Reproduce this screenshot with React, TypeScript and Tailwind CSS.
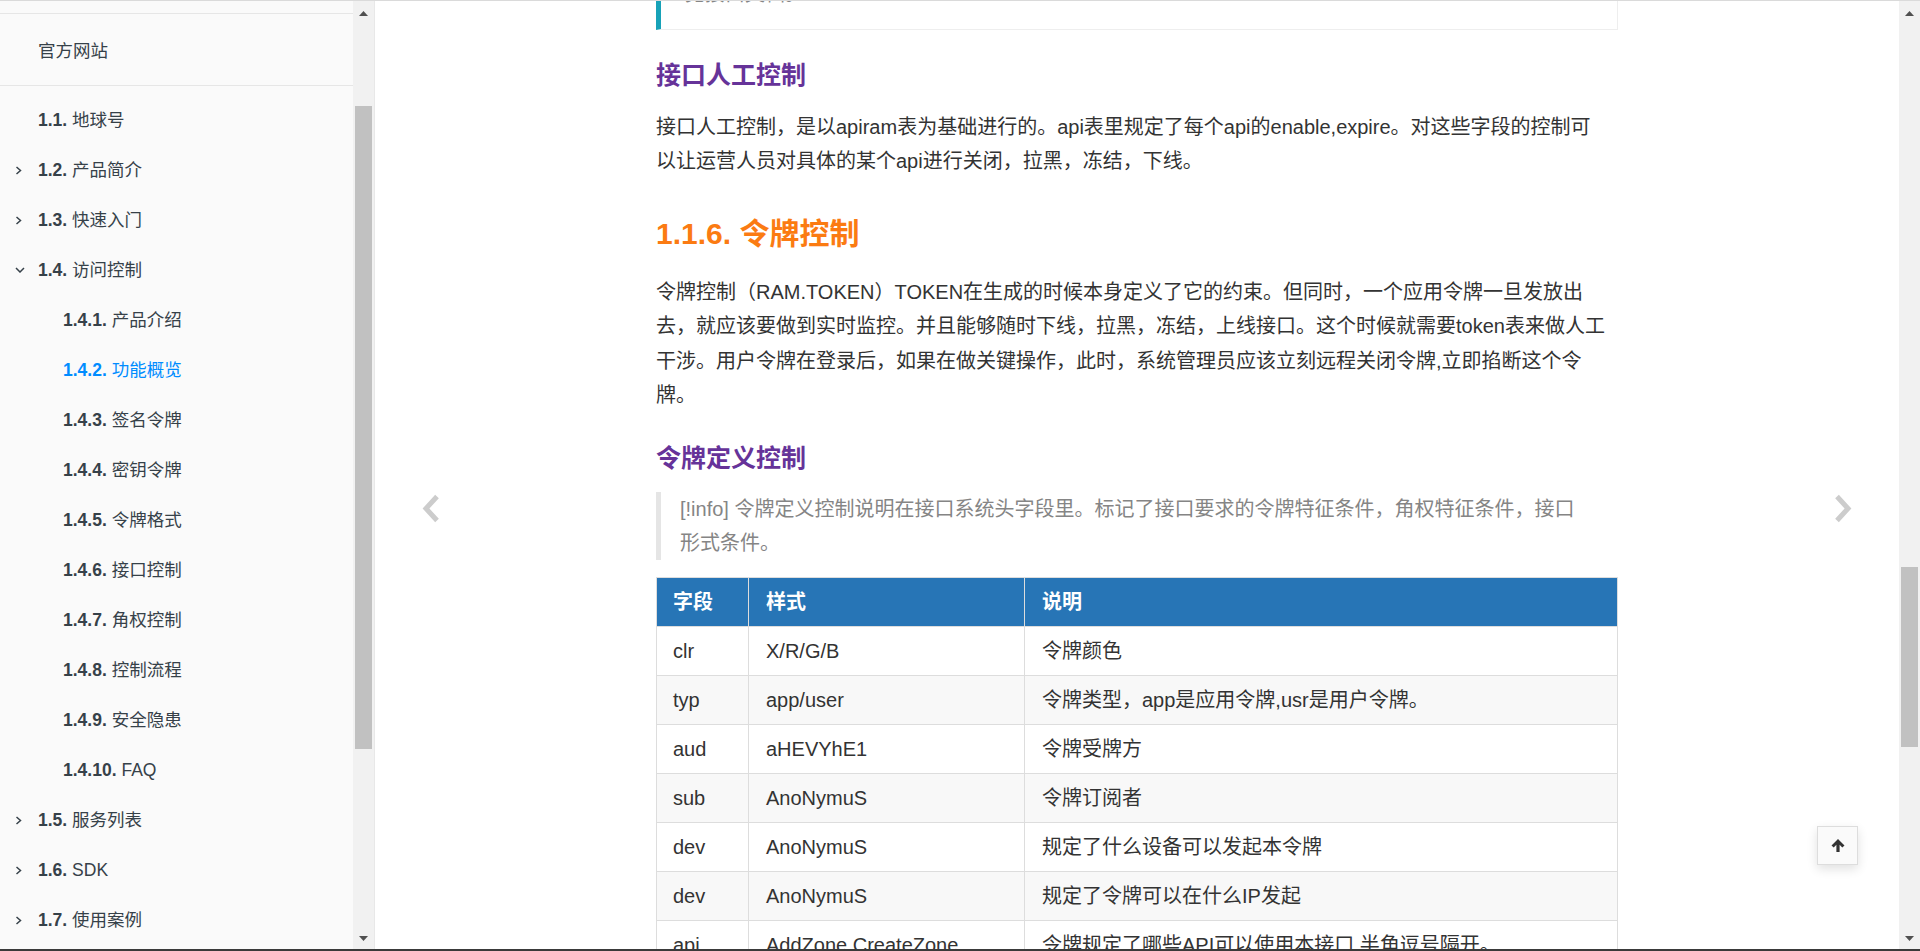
import React from "react";

type Item = { n: string; t: string; lvl: 1 | 2; chev?: "right" | "down"; active?: boolean };

const items: Item[] = [
  { n: "1.1.", t: "地球号", lvl: 1 },
  { n: "1.2.", t: "产品简介", lvl: 1, chev: "right" },
  { n: "1.3.", t: "快速入门", lvl: 1, chev: "right" },
  { n: "1.4.", t: "访问控制", lvl: 1, chev: "down" },
  { n: "1.4.1.", t: "产品介绍", lvl: 2 },
  { n: "1.4.2.", t: "功能概览", lvl: 2, active: true },
  { n: "1.4.3.", t: "签名令牌", lvl: 2 },
  { n: "1.4.4.", t: "密钥令牌", lvl: 2 },
  { n: "1.4.5.", t: "令牌格式", lvl: 2 },
  { n: "1.4.6.", t: "接口控制", lvl: 2 },
  { n: "1.4.7.", t: "角权控制", lvl: 2 },
  { n: "1.4.8.", t: "控制流程", lvl: 2 },
  { n: "1.4.9.", t: "安全隐患", lvl: 2 },
  { n: "1.4.10.", t: "FAQ", lvl: 2 },
  { n: "1.5.", t: "服务列表", lvl: 1, chev: "right" },
  { n: "1.6.", t: "SDK", lvl: 1, chev: "right" },
  { n: "1.7.", t: "使用案例", lvl: 1, chev: "right" },
];

const rows: [string, string, string][] = [
  ["clr", "X/R/G/B", "令牌颜色"],
  ["typ", "app/user", "令牌类型，app是应用令牌,usr是用户令牌。"],
  ["aud", "aHEVYhE1", "令牌受牌方"],
  ["sub", "AnoNymuS", "令牌订阅者"],
  ["dev", "AnoNymuS", "规定了什么设备可以发起本令牌"],
  ["dev", "AnoNymuS", "规定了令牌可以在什么IP发起"],
  ["api", "AddZone,CreateZone", "令牌规定了哪些API可以使用本接口,半角逗号隔开。"],
];

function Chevron({ dir }: { dir: "right" | "down" }) {
  if (dir === "right") {
    return (
      <svg width="7" height="9" viewBox="0 0 7 9" className="block">
        <polyline points="1.5,1 5.5,4.5 1.5,8" fill="none" stroke="#364149" strokeWidth="1.5" />
      </svg>
    );
  }
  return (
    <svg width="10" height="6" viewBox="0 0 10 6" className="block">
      <polyline points="1,1 5,5 9,1" fill="none" stroke="#364149" strokeWidth="1.5" />
    </svg>
  );
}

function Scrollbar({ thumbTop, thumbH }: { thumbTop: number; thumbH: number }) {
  return (
    <div className="relative w-[21px] shrink-0 bg-[#f1f1f1] h-full">
      <svg width="9" height="5" viewBox="0 0 9 5" className="absolute left-[6px] top-[10px]">
        <polygon points="0,5 4.5,0 9,5" fill="#505050" />
      </svg>
      <div
        className="absolute left-[2px] w-[17px] bg-[#c1c1c1]"
        style={{ top: thumbTop, height: thumbH }}
      />
      <svg width="9" height="5" viewBox="0 0 9 5" className="absolute left-[6px] bottom-[8px]">
        <polygon points="0,0 9,0 4.5,5" fill="#505050" />
      </svg>
    </div>
  );
}

function NavArrow({ dir }: { dir: "left" | "right" }) {
  return (
    <svg width="18" height="29" viewBox="0 0 18 29">
      {dir === "left" ? (
        <polyline points="15,2.5 4,14.5 15,26.5" fill="none" stroke="#cccccc" strokeWidth="5" />
      ) : (
        <polyline points="3,2.5 14,14.5 3,26.5" fill="none" stroke="#cccccc" strokeWidth="5" />
      )}
    </svg>
  );
}

export default function App() {
  const font = "font-['Liberation_Sans','Noto_Sans_CJK_SC',sans-serif]";
  return (
    <div
      className={`w-[1920px] h-[951px] overflow-hidden flex flex-col bg-white border-t border-[#dadada] ${font}`}
    >
      <div className="flex flex-1 min-h-0">
        {/* Sidebar */}
        <div className="w-[375px] shrink-0 flex bg-[#fafafa] border-r border-[#e8e8e8]">
          <div className="flex-1 overflow-hidden text-[17.5px] text-[#364149] pt-[12px]">
            <div className="h-px bg-[#e6e6e6]" />
            <div className="h-[50px] mt-[12px] flex items-center pl-[38px]">官方网站</div>
            <div className="h-px bg-[#e6e6e6] my-[9px]" />
            {items.map((it, i) => (
              <div
                key={i}
                className={`h-[50px] flex items-center whitespace-nowrap ${
                  it.lvl === 1 ? "pl-[15px]" : "pl-[63px]"
                } ${it.active ? "text-[#008cff]" : ""}`}
              >
                {it.lvl === 1 && (
                  <span className="w-[23px] flex items-center">
                    {it.chev && <Chevron dir={it.chev} />}
                  </span>
                )}
                <b className="font-bold">{it.n}</b>
                <span>&nbsp;{it.t}</span>
              </div>
            ))}
          </div>
          <Scrollbar thumbTop={105} thumbH={643} />
        </div>

        {/* Main */}
        <div className="flex-1 flex min-w-0">
          <div className="relative flex-1 overflow-hidden">
            <div className="w-[962px] mx-auto text-[20px] leading-[34px] text-[#333333]">
              {/* partially scrolled callout */}
              <div className="mt-[-44px] border-l-[5px] border-l-[#17a2b8] border-r border-b border-r-[#eeeeee] border-b-[#eeeeee] pl-[24px] pt-[20px] pb-[18px] text-[#858585]">
                见接口文档。
              </div>

              <h3 className="mt-[30px] text-[25px] leading-[30px] font-bold text-[#663399]">接口人工控制</h3>
              <p className="mt-[20px]">
                接口人工控制，是以apiram表为基础进行的。api表里规定了每个api的enable,expire。对这些字段的控制可
                <br />
                以让运营人员对具体的某个api进行关闭，拉黑，冻结，下线。
              </p>

              <h2 className="mt-[38px] text-[30px] leading-[36px] font-bold text-[#fb7b12]">1.1.6. 令牌控制</h2>
              <p className="mt-[23px] leading-[34.3px]">
                令牌控制（RAM.TOKEN）TOKEN在生成的时候本身定义了它的约束。但同时，一个应用令牌一旦发放出
                <br />
                去，就应该要做到实时监控。并且能够随时下线，拉黑，冻结，上线接口。这个时候就需要token表来做人工
                <br />
                干涉。用户令牌在登录后，如果在做关键操作，此时，系统管理员应该立刻远程关闭令牌,立即掐断这个令
                <br />
                牌。
              </p>

              <h3 className="mt-[31px] text-[25px] leading-[30px] font-bold text-[#663399]">令牌定义控制</h3>
              <blockquote className="mt-[19px] border-l-[5px] border-[#e5e5e5] pl-[19px] text-[#858585]">
                [!info] 令牌定义控制说明在接口系统头字段里。标记了接口要求的令牌特征条件，角权特征条件，接口
                <br />
                形式条件。
              </blockquote>

              <div className="mt-[17px] border-t border-[#dddddd]">
                <div className="grid grid-cols-[92px_276px_1fr] h-[49px] border-b border-[#dddddd] bg-[#2775b6] text-white font-bold">
                  <div className="border-l border-[#dddddd] pl-[16px] flex items-center">字段</div>
                  <div className="border-l border-[#dddddd] pl-[17px] flex items-center">样式</div>
                  <div className="border-l border-r border-[#dddddd] pl-[17px] flex items-center">说明</div>
                </div>
                {rows.map((r, i) => (
                  <div
                    key={i}
                    className={`grid grid-cols-[92px_276px_1fr] h-[49px] border-b border-[#dddddd] ${
                      i % 2 === 1 ? "bg-[#f8f8f8]" : "bg-white"
                    }`}
                  >
                    <div className="border-l border-[#dddddd] pl-[16px] flex items-center whitespace-nowrap">{r[0]}</div>
                    <div className="border-l border-[#dddddd] pl-[17px] flex items-center whitespace-nowrap">{r[1]}</div>
                    <div className="border-l border-r border-[#dddddd] pl-[17px] flex items-center whitespace-nowrap">{r[2]}</div>
                  </div>
                ))}
              </div>
            </div>

            {/* navigation arrows */}
            <div className="absolute left-0 top-[66px] bottom-0 w-[112px] flex items-center justify-center">
              <NavArrow dir="left" />
            </div>
            <div className="absolute right-0 top-[66px] bottom-0 w-[112px] flex items-center justify-center">
              <NavArrow dir="right" />
            </div>

            {/* back to top */}
            <div className="absolute right-[41px] bottom-[84px] w-[41px] h-[39px] bg-[#fafafa] border border-[#dddddd] shadow-[0_4px_10px_rgba(0,0,0,0.12)] flex items-center justify-center">
              <svg width="14" height="13" viewBox="0 0 14 13">
                <path d="M7 0 L13.5 6.5 L11.3 8.5 L8.6 5.8 V13 H5.4 V5.8 L2.7 8.5 L0.5 6.5 Z" fill="#333333" />
              </svg>
            </div>
          </div>
          <Scrollbar thumbTop={566} thumbH={180} />
        </div>
      </div>
      <div className="h-[2px] bg-[#3a3a3a]" />
    </div>
  );
}
